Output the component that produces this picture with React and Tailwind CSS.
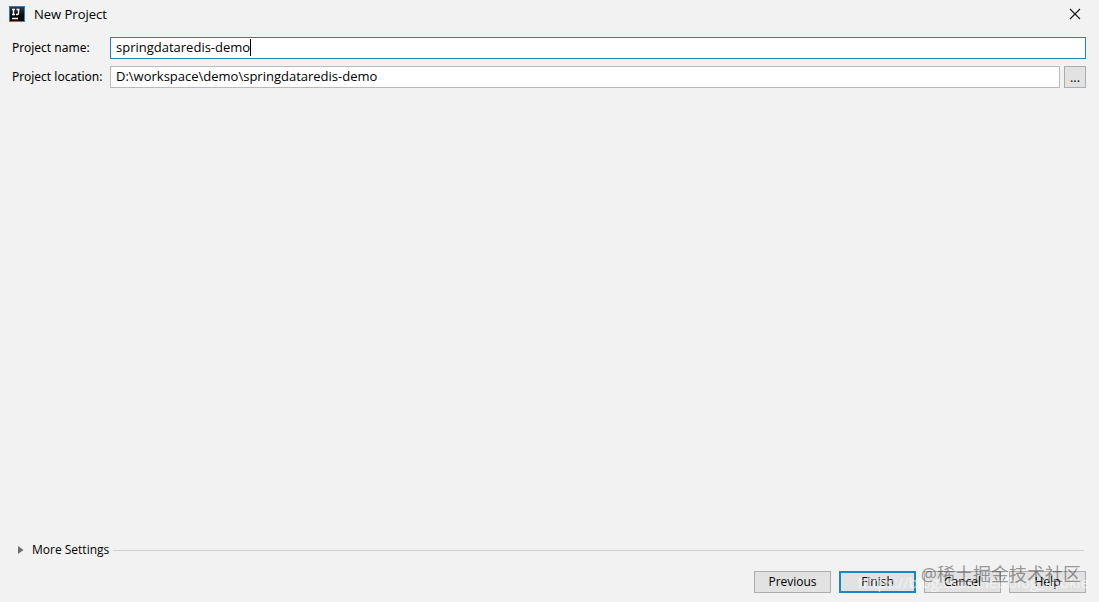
import { useState } from 'react'

function AppIcon() {
  return (
    <svg width="16" height="16" viewBox="0 0 16 16" aria-hidden="true">
      <defs>
        <linearGradient id="edge" x1="0" y1="0" x2="0" y2="1">
          <stop offset="0" stopColor="#3579ab" />
          <stop offset="1" stopColor="#1c8be0" />
        </linearGradient>
        <linearGradient id="face" x1="0" y1="0" x2="0" y2="1">
          <stop offset="0" stopColor="#343a42" />
          <stop offset="0.6" stopColor="#07090c" />
        </linearGradient>
      </defs>
      <rect width="16" height="16" fill="url(#edge)" />
      <rect x="1" y="1" width="14" height="14" fill="url(#face)" />
      <path d="M3 3.5h3M4.5 3.5v5M3 8.500h3M7.500 3.500h3M9.500 3.500v4q0 1-1 1h-1.500M3 12.500h6" stroke="#fff" strokeWidth="1.3" fill="none" />
    </svg>
  )
}

function DialogButton({ children, primary }) {
  return (
    <button
      type="button"
      className={
        primary
          ? 'h-[22px] w-[77px] border-2 border-[#1a86c8] bg-[#e2e2e2] text-center leading-[18px]'
          : 'h-[22px] w-[77px] border border-[#adadad] bg-[#e2e2e2] text-center leading-5'
      }
    >
      {children}
    </button>
  )
}

export default function App() {
  const [name, setName] = useState('springdataredis-demo')
  const [location, setLocation] = useState('D:\\workspace\\demo\\springdataredis-demo')

  return (
    <div className="flex min-h-screen flex-col bg-[#f2f2f2] font-['Open_Sans','Noto_Sans_CJK_SC',sans-serif] text-[12px] text-black">
      <header className="flex h-7 items-center justify-between pr-[18px] pl-[9px] text-[13px]">
        <div className="flex items-center gap-[9px]">
          <AppIcon />
          <h1 className="leading-4">New Project</h1>
        </div>
        <button type="button" aria-label="Close">
          <svg width="12" height="12" viewBox="0 0 12 12" fill="none" stroke="#111" strokeWidth="1.1">
            <path d="M1 1l10 10M11 1L1 11" />
          </svg>
        </button>
      </header>

      <main className="flex flex-1 flex-col text-[13px]">
        <form className="flex flex-col gap-[7px] pt-[9px] pr-[13px] pl-3">
          <div className="flex items-center">
            <label htmlFor="name" className="w-[98px] shrink-0 font-['Noto_Sans',sans-serif] text-[12px]">Project name:</label>
            <div className="relative flex-1">
              <input
                id="name"
                className="block h-[22px] w-full border border-[#1a86b8] bg-white px-[5px] pb-[2px] outline-none"
                value={name}
                onChange={(e) => setName(e.target.value)}
              />
              <span aria-hidden="true" className="pointer-events-none absolute top-[2px] left-[6px] h-[17px] border-r border-black">
                <span className="invisible">{name}</span>
              </span>
            </div>
          </div>
          <div className="flex items-center">
            <label htmlFor="location" className="w-[98px] shrink-0 font-['Noto_Sans',sans-serif] text-[12px]">Project location:</label>
            <input
              id="location"
              className="h-[22px] min-w-0 flex-1 border border-[#bababa] bg-white px-[5px] pb-[2px] outline-none"
              value={location}
              onChange={(e) => setLocation(e.target.value)}
            />
            <button type="button" aria-label="Browse" className="ml-1 h-[22px] w-[22px] border border-[#adadad] bg-[#e2e2e2] leading-5">
              ...
            </button>
          </div>
        </form>
      </main>

      <footer className="relative pb-[9px]">
        <div className="flex items-center gap-1 pr-[15px] pl-[18px]">
          <button type="button" className="flex items-center gap-2">
            <svg width="6" height="8" viewBox="0 0 6 8" fill="#6e6e6e" aria-hidden="true">
              <path d="M0 0l5.5 4L0 8z" />
            </svg>
            More Settings
          </button>
          <div className="h-px flex-1 bg-[#cfcfcf]" />
        </div>
        <div className="flex justify-end gap-2 pt-3 pr-[13px]">
          <DialogButton>Previous</DialogButton>
          <DialogButton primary>Finish</DialogButton>
          <DialogButton>Cancel</DialogButton>
          <DialogButton>Help</DialogButton>
        </div>
        <span className="pointer-events-none absolute right-[10px] bottom-[10px] text-[15px] leading-5 whitespace-nowrap text-white/60">
          https://blog.csdn.net/blog_rookie
        </span>
        <span className="pointer-events-none absolute right-[18px] bottom-[16px] text-[18px] leading-6 whitespace-nowrap text-black/40">
          @稀土掘金技术社区
        </span>
      </footer>
    </div>
  )
}
